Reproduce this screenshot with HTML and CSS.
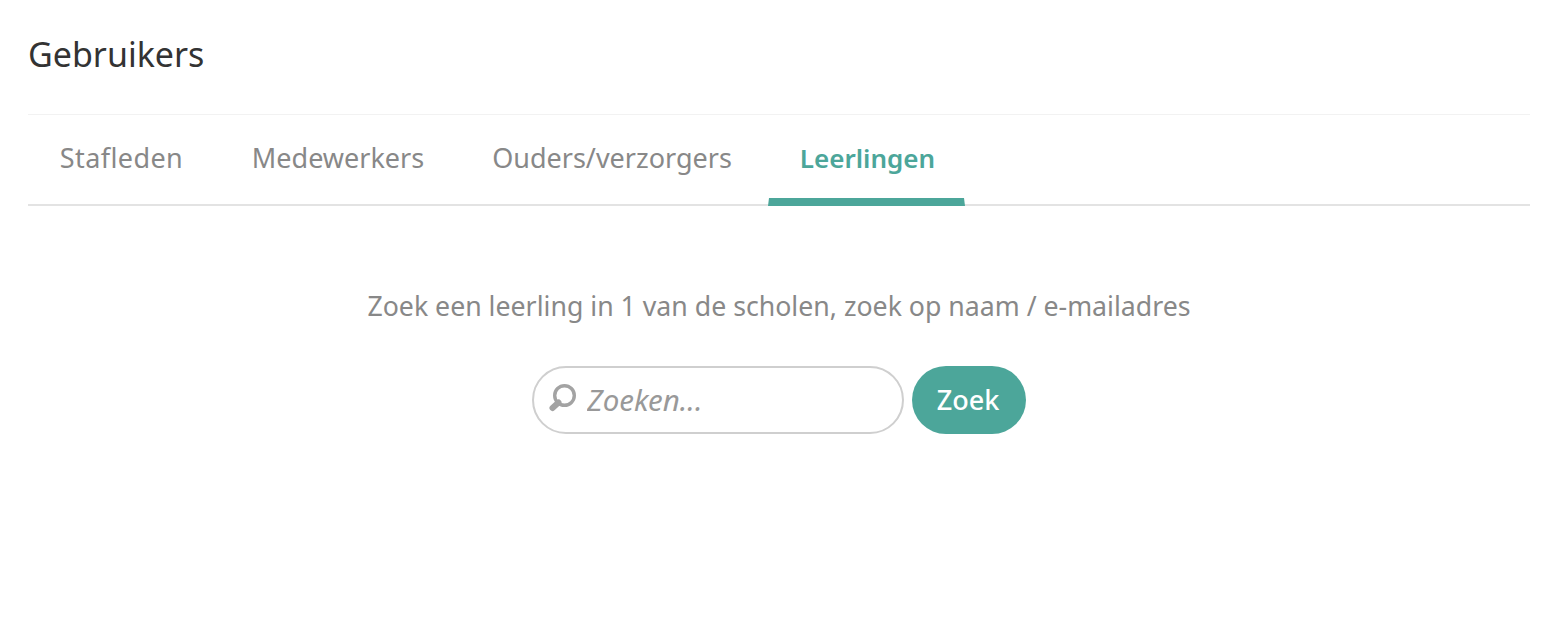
FILE: index.html
```html
<!DOCTYPE html>
<html lang="nl">
<head>
  <meta charset="UTF-8">
  <meta name="viewport" content="width=device-width, initial-scale=1.0">
  <title>Gebruikers</title>
  <link rel="stylesheet" href="styles.css">
</head>
<body>
  <div class="container">
    <h1 class="page-title">Gebruikers</h1>
    <nav class="tabs">
      <a class="tab tab-staf" href="#">Stafleden</a>
      <a class="tab tab-medewerkers" href="#">Medewerkers</a>
      <a class="tab tab-ouders" href="#">Ouders/verzorgers</a>
      <a class="tab tab-active" href="#">Leerlingen</a>
    </nav>
    <div class="search-section">
      <p class="search-intro">Zoek een leerling in 1 van de scholen, zoek op naam / e-mailadres</p>
      <form class="search-form">
        <div class="search-box">
          <svg class="search-icon" viewBox="0 0 32 32" width="32" height="32">
            <circle cx="16.5" cy="11.5" r="9.8" fill="none" stroke="#a3a3a3" stroke-width="3.4"/>
            <path d="M10.5 18.5 L4.5 24" fill="none" stroke="#a3a3a3" stroke-width="6" stroke-linecap="round"/>
          </svg>
          <input class="search-input" type="text" placeholder="Zoeken...">
        </div>
        <button class="search-button" type="button">Zoek</button>
      </form>
    </div>
  </div>
</body>
</html>
```

FILE: styles.css
```css
body {
    font-family: "Noto Sans", Arial, sans-serif;
    background-color: #fff;
    margin: 0;
    color: #333;
}
.container {
    margin: 0 28px;
}
.page-title {
    margin: 0;
    height: 115px;
    box-sizing: border-box;
    padding-top: 32px;
    border-bottom: 1px solid #f2f2f2;
    font-size: 34px;
    line-height: 44px;
    font-weight: 400;
    color: #333;
}
.tabs {
    display: flex;
    gap: 5px;
    height: 89px;
    border-bottom: 2px solid #e3e3e3;
}
.tab {
    box-sizing: border-box;
    height: 89px;
    padding: 25px 0 0;
    font-size: 27px;
    line-height: 36px;
    color: #888;
    text-decoration: none;
    text-align: center;
    white-space: nowrap;
}
.tab-staf {
    width: 187px;
    letter-spacing: 0.4px;
}
.tab-medewerkers {
    width: 236px;
}
.tab-ouders {
    width: 302px;
}
.tab-active {
    width: 197px;
    padding-left: 2px;
    font-size: 26px;
    color: #4ca69a;
    font-weight: 600;
    position: relative;
}
.tab-active::after {
    content: "";
    position: absolute;
    left: 0;
    right: 0;
    bottom: -2px;
    height: 8px;
    background: #4ca69a;
    clip-path: polygon(1px 0, calc(100% - 1px) 0, 100% 100%, 0 100%);
}
.search-section {
    padding-top: 80px;
    text-align: center;
}
.search-intro {
    margin: 0;
    font-size: 26.7px;
    line-height: 40px;
    color: #888;
}
.search-form {
    display: flex;
    justify-content: center;
    gap: 8px;
    margin-top: 40px;
}
.search-box {
    display: flex;
    align-items: center;
    gap: 7px;
    box-sizing: border-box;
    width: 372px;
    height: 68px;
    padding: 0 12px 0 14px;
    background: #fff;
    border: 2px solid #cfcfcf;
    border-radius: 34px;
}
.search-icon {
    flex: none;
}
.search-input {
    flex: 1;
    min-width: 0;
    border: none;
    outline: none;
    padding: 0 0 2px;
    background: transparent;
    font-family: inherit;
    font-size: 29.5px;
    font-style: italic;
    color: #888;
}
.search-input::placeholder {
    color: #999;
    opacity: 1;
}
.search-button {
    width: 114px;
    height: 68px;
    padding: 0 2px 2px 0;
    border: none;
    border-radius: 34px;
    background: #4ca69a;
    color: #fff;
    font-family: inherit;
    font-size: 27px;
    font-weight: 500;
    cursor: pointer;
}
```
